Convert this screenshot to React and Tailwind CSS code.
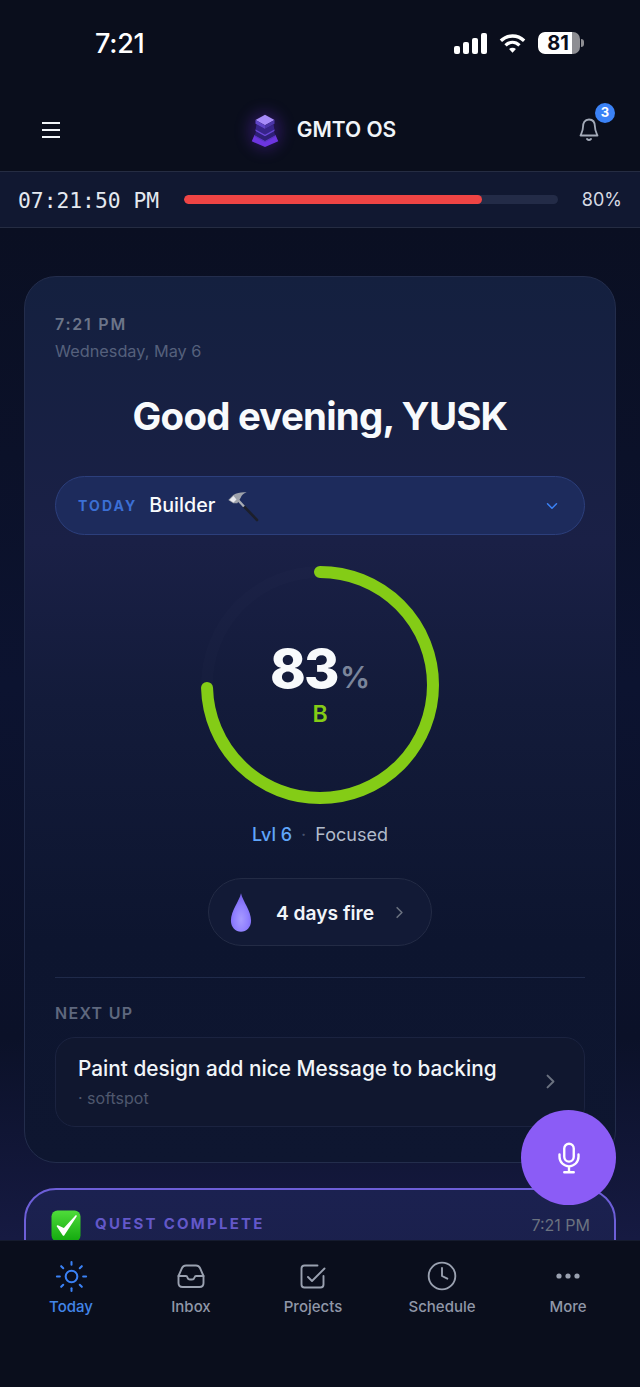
import React from "react";
import { IoChevronDown, IoChevronForward, IoMicOutline } from "react-icons/io5";
import { Sun, Clock } from "lucide-react";

function Signal() {
  return (
    <svg width="33" height="21" viewBox="0 0 33 21" fill="white">
      <rect x="0" y="13" width="6" height="8" rx="2" />
      <rect x="9" y="9" width="6" height="12" rx="2" />
      <rect x="18" y="5" width="6" height="16" rx="2" />
      <rect x="27" y="0" width="6" height="21" rx="2" />
    </svg>
  );
}

function Wifi() {
  return (
    <svg width="27" height="21" viewBox="0 0 29 22" fill="none" stroke="white" strokeWidth="3.6">
      <path d="M2 8 C9 1.2 20 1.2 27 8" />
      <path d="M7 13 C11.5 8.8 17.5 8.8 22 13" />
      <path d="M14.5 21 L10.8 17 C13 15.2 16 15.2 18.2 17 Z" fill="white" stroke="none" />
    </svg>
  );
}

function Battery() {
  return (
    <div className="flex items-center">
      <div className="relative w-[42px] h-[22px] rounded-[7px] bg-[#8e8e93] overflow-hidden">
        <div className="absolute left-0 top-0 h-full w-[34px] bg-white rounded-l-[7px]" />
        <div className="absolute inset-0 flex items-center justify-center pr-[2px] text-[#0a0e1c] text-[20px] font-bold leading-none">81</div>
      </div>
      <div className="w-[3px] h-[8px] ml-[1px] rounded-r-full bg-[#8e8e93]" />
    </div>
  );
}

function Menu() {
  return (
    <svg width="18" height="16" viewBox="0 0 18 16" stroke="#f1f5f9" strokeWidth="2">
      <path d="M0 1 H18 M0 8 H18 M0 15 H18" />
    </svg>
  );
}

function Bell() {
  return (
    <svg width="20" height="24" viewBox="0 0 20 24" fill="none" stroke="#a3aab8" strokeWidth="1.8" strokeLinejoin="round" strokeLinecap="round">
      <path d="M10 1.5 C5.5 1.5 4 5 4 9 C4 13 2.5 15 1.5 17.5 H18.5 C17.5 15 16 13 16 9 C16 5 14.5 1.5 10 1.5 Z" />
      <path d="M8 21 Q10 23 12 21" />
    </svg>
  );
}

function Logo() {
  return (
    <div className="relative w-[36px] h-[44px] flex items-center justify-center">
      <div className="absolute left-[2px] top-[4px] w-[32px] h-[38px] rounded-full bg-[#6d28d9]/30 blur-[7px]" />
      <svg className="relative" width="32" height="36" viewBox="0 0 32 38">
        <path d="M5 24 L16 30 L27 24 L30 31 L16 37 L2 31 Z" fill="#6d35e0" />
        <path d="M7 19 L16 24 L25 19 L27 25 L16 31 L5 25 Z" fill="#2f1f78" />
        <path d="M5 24.5 L16 30.5 L27 24.5 V26 L16 32 L5 26 Z" fill="#5b36c4" />
        <path d="M7 13 L16 18 L25 13 L26 19 L16 25 L6 19 Z" fill="#37248a" />
        <path d="M6 18.5 L16 24 L26 18.5 V20 L16 25.5 L6 20 Z" fill="#6a48d8" />
        <path d="M16 3 L26 8.5 L16 14 L6 8.5 Z" fill="#a78bfa" />
        <path d="M6 8.5 L16 14 V18 L6 12.5 Z" fill="#5f45c8" />
        <path d="M26 8.5 L16 14 V18 L26 12.5 Z" fill="#4b35a8" />
      </svg>
    </div>
  );
}

function Hammer() {
  return (
    <svg width="32" height="32" viewBox="0 0 32 32">
      <path d="M17 16.5 L30 30" stroke="#1c1f2b" strokeWidth="2.6" strokeLinecap="round" />
      <path d="M11 10 L17 16.5" stroke="#a8acb4" strokeWidth="2.4" />
      <path d="M1.3 10 L6.3 5 C10 2.5 15 1.8 19.7 2.3 C16.5 3.5 14.5 5.5 13.7 7.7 L10.3 13.3 L6.3 13.3 Z" fill="#9ea2ab" />
      <path d="M2.5 10 L6.5 6 L9.5 9.5 L6.5 12.5 Z" fill="#e8e9ee" />
    </svg>
  );
}

function Ring() {
  return (
    <svg width="240" height="240" viewBox="0 0 240 240" className="block">
      <circle cx="120" cy="120" r="113" fill="none" stroke="#ffffff" strokeOpacity="0.012" strokeWidth="12" />
      <circle
        cx="120"
        cy="120"
        r="113"
        fill="none"
        stroke="#84cc16"
        strokeWidth="12"
        strokeLinecap="round"
        strokeDasharray="529 710"
        transform="rotate(-90 120 120)"
      />
    </svg>
  );
}

function Drop() {
  return (
    <svg width="22" height="43" viewBox="0 0 24 44">
      <defs>
        <radialGradient id="dropFill" cx="50%" cy="68%" r="60%">
          <stop offset="0%" stopColor="#a79bff" />
          <stop offset="60%" stopColor="#8f7fff" />
          <stop offset="100%" stopColor="#7a66f0" />
        </radialGradient>
      </defs>
      <path d="M12 1 C14 10 23 20 23 31 C23 38 18 43 12 43 C6 43 1 38 1 31 C1 20 10 10 12 1 Z" fill="url(#dropFill)" />
    </svg>
  );
}

function CheckEmoji() {
  return (
    <svg width="30" height="32" viewBox="0 0 30 32" className="shrink-0">
      <defs>
        <linearGradient id="chk" x1="0" y1="0" x2="0" y2="1">
          <stop offset="0%" stopColor="#4fdc3a" />
          <stop offset="100%" stopColor="#12a90e" />
        </linearGradient>
      </defs>
      <rect x="0.5" y="0.5" width="29" height="31" rx="6" fill="url(#chk)" />
      <path d="M6.5 16 L12.5 25 L25 6 L13 19 Z" fill="white" stroke="white" strokeWidth="1.6" strokeLinejoin="round" />
    </svg>
  );
}

function TrayIcon() {
  return (
    <svg width="28" height="24" viewBox="0 0 28 24" fill="none" stroke="currentColor" strokeWidth="1.9" strokeLinejoin="round" strokeLinecap="round">
      <path d="M1.5 12 L5 4 Q6.2 1.5 9 1.5 H19 Q21.8 1.5 23 4 L26.5 12 V19 Q26.5 23 22.5 23 H5.5 Q1.5 23 1.5 19 Z" />
      <path d="M1.5 12 H9 Q10 12 10.5 13.5 Q11 15.5 13 15.5 H15 Q17 15.5 17.5 13.5 Q18 12 19 12 H26.5" />
    </svg>
  );
}

function TaskIcon() {
  return (
    <svg width="26" height="25" viewBox="0 0 26 25" fill="none" stroke="currentColor" strokeWidth="1.9" strokeLinejoin="round" strokeLinecap="round">
      <path d="M17.5 1.5 H4.5 Q1.5 1.5 1.5 4.5 V20.5 Q1.5 23.5 4.5 23.5 H20.5 Q23.5 23.5 23.5 20.5 V12" />
      <path d="M8 13 L12 17 L24.5 4.5" />
    </svg>
  );
}

function DotsIcon() {
  return (
    <svg width="24" height="6" viewBox="0 0 24 6" fill="currentColor">
      <circle cx="3" cy="3" r="2.6" />
      <circle cx="12" cy="3" r="2.6" />
      <circle cx="21" cy="3" r="2.6" />
    </svg>
  );
}

const NAV = [
  { label: "Today", icon: <Sun size={35} strokeWidth={1.4} />, w: "w-[120px]", active: true },
  { label: "Inbox", icon: <TrayIcon />, w: "w-[120px]" },
  { label: "Projects", icon: <TaskIcon />, w: "w-[124px]" },
  { label: "Schedule", icon: <Clock size={32} strokeWidth={1.4} />, w: "w-[134px]" },
  { label: "More", icon: <DotsIcon />, w: "w-[118px]" },
];

export default function App() {
  return (
    <div className="relative w-[640px] h-[1387px] overflow-hidden flex flex-col bg-[#0a0e1c] text-white font-['Inter',sans-serif]">
      {/* status bar */}
      <div className="h-[88px] shrink-0 flex items-center justify-between pl-[95px] pr-[56px] pb-[2px]">
        <span className="text-[27px] font-medium tracking-[-0.01em] leading-none">7:21</span>
        <div className="flex items-center gap-[12px]">
          <Signal />
          <Wifi />
          <Battery />
        </div>
      </div>

      {/* header */}
      <div className="h-[83px] shrink-0 relative flex items-center justify-between pl-[42px] pr-[34px]">
        <Menu />
        <div className="flex items-center gap-[14px] ml-[11px]">
          <Logo />
          <span className="text-[21px] font-semibold text-[#f1f5f9]">GMTO OS</span>
        </div>
        <div className="relative w-[34px] h-[34px] flex items-center justify-center">
          <Bell />
          <div className="absolute -top-[10px] -right-[9px] w-[20px] h-[20px] rounded-full bg-[#3b82f6] flex items-center justify-center text-[13px] font-bold leading-none">3</div>
        </div>
      </div>

      {/* clock bar */}
      <div className="h-[57px] shrink-0 flex items-center bg-[#111831] border-y border-[#252c42] pl-[18px] pr-[18px]">
        <span className="font-['DejaVu_Sans_Mono',monospace] text-[21.3px] leading-none mt-[2px] text-[#e5e9f0] w-[166px] shrink-0">07:21:50 PM</span>
        <div className="w-[374px] h-[9px] rounded-full bg-[#232b47] overflow-hidden shrink-0">
          <div className="w-[298px] h-full rounded-full bg-[#ef4444]" />
        </div>
        <span className="ml-auto text-[18px] leading-none text-[#d7dbe4]">80%</span>
      </div>

      {/* main */}
      <div className="flex-1 min-h-0 overflow-hidden px-[24px] pt-[48px] bg-[linear-gradient(180deg,#0a0f22_0%,#0c1330_45%,#0b1128_80%,#161a42_100%)]">
        <div className="h-[887px] rounded-[32px] border border-[#232d4c] bg-[linear-gradient(180deg,#14203f_0%,#1a2046_30%,#131b3a_48%,#0d152f_75%,#0e1630_100%)] px-[30px] pt-[37px]">
          <div className="text-[16px] leading-[20px] font-semibold tracking-[0.11em] text-[#6c7589]">7:21 PM</div>
          <div className="text-[16.3px] leading-[20px] mt-[7px] text-[#55607c]">Wednesday, May 6</div>
          <div className="mt-[32px] text-center text-[38.4px] leading-[46px] font-bold tracking-[-0.02em] text-[#f8fafc]">Good evening, YUSK</div>

          <div className="mt-[37px] h-[59px] rounded-full bg-[#1d2b5c] border border-[#2c3f7c] flex items-center pl-[22px] pr-[24px]">
            <span className="text-[14px] font-bold tracking-[0.15em] text-[#3b6fd4]">TODAY</span>
            <span className="ml-[12px] text-[19.7px] font-medium text-[#f8fafc]">Builder</span>
            <span className="ml-[12px] mt-[1px]"><Hammer /></span>
            <IoChevronDown className="ml-auto text-[16px] text-[#3b82f6]" />
          </div>

          <div className="mt-[30px] flex justify-center">
            <div className="relative w-[240px] h-[240px]">
              <Ring />
              <div className="absolute inset-0 flex flex-col items-center justify-center pb-[3px]">
                <div className="flex items-baseline leading-none">
                  <span className="text-[54px] leading-[58px] font-extrabold tracking-[-0.03em] text-[#f8fafc]">83</span>
                  <span className="text-[30px] ml-[2px] font-semibold text-[#7b859b]">%</span>
                </div>
                <span className="text-[23px] leading-[26px] font-semibold text-[#84cc16] mt-[3px]">B</span>
              </div>
            </div>
          </div>

          <div className="mt-[18px] flex justify-center items-center text-[18px] leading-[24px]">
            <span className="font-medium text-[#60a5fa]">Lvl 6</span>
            <span className="mx-[9px] text-[#47526d]">·</span>
            <span className="text-[#b2bbcb]">Focused</span>
          </div>

          <div className="mt-[31px] flex justify-center">
            <div className="w-[224px] h-[68px] rounded-full bg-[#121a36] border border-[#232b45] flex items-center pl-[21px]">
              <Drop />
              <span className="ml-[24px] mt-[2px] text-[19.2px] font-semibold text-[#f1f5f9]">4 days fire</span>
              <IoChevronForward className="ml-[17px] text-[17px] text-[#6b7280]" />
            </div>
          </div>

          <div className="mt-[31px] h-px bg-[#1f2a4a]" />
          <div className="mt-[25px] text-[16px] leading-[20px] font-semibold tracking-[0.08em] text-[#5f687e]">NEXT UP</div>

          <div className="mt-[14px] h-[90px] rounded-[20px] bg-[#10172f] border border-[#1b2340] flex items-center pl-[22px] pr-[23px] pb-[2px]">
            <div className="flex-1 min-w-0">
              <div className="text-[20.8px] leading-[28px] font-medium text-[#f1f5f9] whitespace-nowrap">Paint design add nice Message to backing</div>
              <div className="mt-[5px] text-[16px] leading-[20px] text-[#4f586e]">· softspot</div>
            </div>
            <IoChevronForward className="text-[21px] text-[#6b7280] shrink-0" />
          </div>
        </div>

        <div className="mt-[25px] h-[140px] rounded-[32px] border-2 border-[#6d5fd8] bg-[linear-gradient(180deg,#1b2150_0%,#1a1f48_100%)] pl-[25px] pr-[24px] pt-[20px]">
          <div className="flex items-center">
            <CheckEmoji />
            <span className="ml-[14px] mb-[3px] text-[15px] font-bold tracking-[0.15em] text-[#6358c9]">QUEST COMPLETE</span>
            <span className="ml-auto mb-[3px] text-[16px] text-[#6b7280]">7:21 PM</span>
          </div>
        </div>
      </div>

      {/* bottom nav */}
      <div className="h-[147px] shrink-0 bg-[#0a0e1c] border-t border-[#151b2e] flex items-start pl-[11px] pt-[18px]">
        {NAV.map(({ label, icon, w, active }) => (
          <div key={label} className={`${w} flex flex-col items-center gap-[4px] ${active ? "text-[#3b82f6]" : "text-[#9aa1b0]"}`}>
            <div className="h-[34px] flex items-center justify-center">{icon}</div>
            <span className={`text-[15px] leading-[20px] font-medium ${active ? "text-[#4285e8]" : "text-[#9097a8]"}`}>{label}</span>
          </div>
        ))}
      </div>

      {/* floating mic */}
      <div className="absolute left-[521px] top-[1110px] w-[95px] h-[95px] rounded-full bg-[#8b5cf6] flex items-center justify-center">
        <IoMicOutline className="text-[38px] text-white" />
      </div>
    </div>
  );
}
